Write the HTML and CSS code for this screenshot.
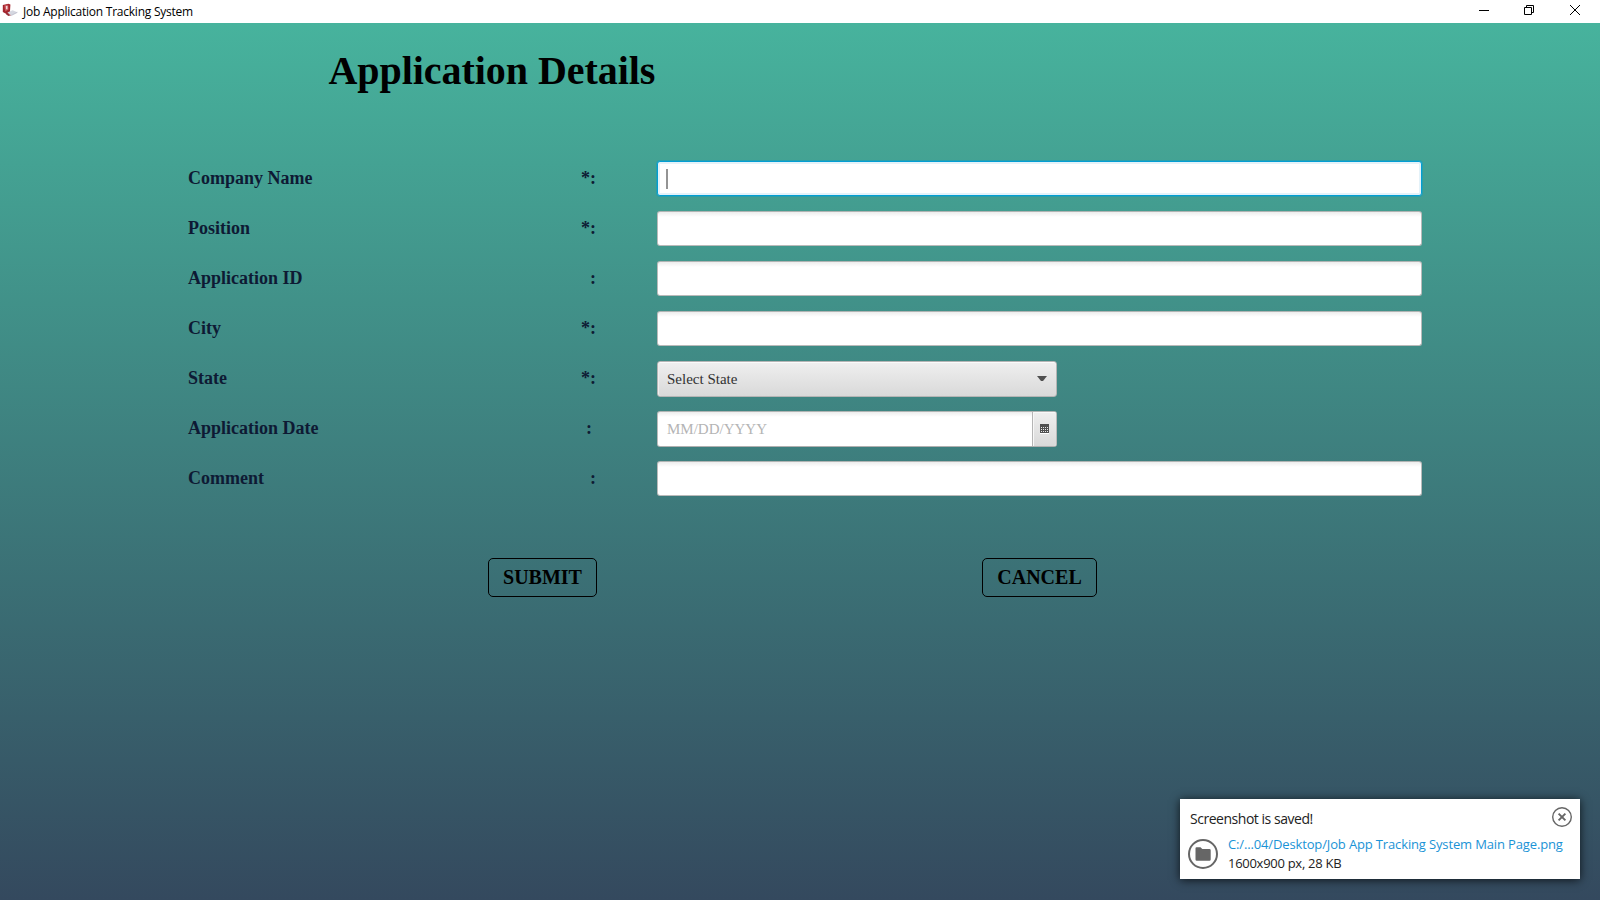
FILE: index.html
```html
<!DOCTYPE html>
<html lang="en">
<head>
<meta charset="utf-8">
<title>Job Application Tracking System</title>
<link rel="stylesheet" href="styles.css">
</head>
<body>
<div class="window">
  <header class="titlebar">
    <svg class="app-icon" width="16" height="14" viewBox="0 0 16 14">
      <path d="M.8 2 6.4.8 8.4 1.6 8 8.5 5.8 11.8 .8 9z" fill="#a3242d"/>
      <path d="M2.2 2.4 6.2 1.4l.4 5.2-3.3 2z" fill="#c9555b"/>
      <path d="M3.8 3h1.7v3.2H4z" fill="#f1d6d8"/>
      <path d="M5.4 9.4 10.6 7.2l4.8 2-6.2 3.1z" fill="#d5d7e0"/>
      <path d="m4.6 9.8 4.6 2.5-2.8.7-2.2-1.6z" fill="#96323a"/>
      <path d="m9.2 12.5 6.2-3.2" stroke="#aab" stroke-width=".7"/>
    </svg>
    <span class="app-name">Job Application Tracking System</span>
    <div class="window-controls">
      <svg width="10" height="10"><path d="M0 5.5h10" stroke="#000"/></svg>
      <svg class="restore" width="10" height="10" fill="none" stroke="#000"><path d="M.5 2.5h7v7h-7zM2.5 2.5v-2h7v7h-2"/></svg>
      <svg width="10" height="10" fill="none" stroke="#000"><path d="m0 0 10 10M10 0 0 10"/></svg>
    </div>
  </header>
  <main class="page">
    <h1 class="heading">Application Details</h1>
    <div class="form">
      <div class="row"><label>Company Name</label><span class="mark">*:</span><div class="field focused"><i class="caret"></i></div></div>
      <div class="row"><label>Position</label><span class="mark">*:</span><div class="field"></div></div>
      <div class="row"><label>Application ID</label><span class="mark">:</span><div class="field"></div></div>
      <div class="row"><label>City</label><span class="mark">*:</span><div class="field"></div></div>
      <div class="row"><label>State</label><span class="mark">*:</span>
        <div class="select"><span>Select State</span><svg class="arrow" width="10" height="5"><path d="M0 0h10L6 5H4z" fill="#505050"/></svg></div>
      </div>
      <div class="row"><label>Application Date</label><span class="mark inset">:</span>
        <div class="date"><span class="placeholder">MM/DD/YYYY</span>
          <span class="date-button"><svg width="9" height="10" shape-rendering="crispEdges">
            <path d="M0 9h9v1H0z" fill="#fff"/>
            <path d="M0 0h9v9H0z" fill="#505050"/>
            <path d="M1 3.5h7M1 5.5h7M1 7.5h7" stroke="#e8e8e8" stroke-dasharray="1 1"/>
          </svg></span>
        </div>
      </div>
      <div class="row"><label>Comment</label><span class="mark">:</span><div class="field"></div></div>
    </div>
    <div class="actions">
      <button class="action submit">SUBMIT</button>
      <button class="action cancel">CANCEL</button>
    </div>
  </main>
  <aside class="toast">
    <div class="toast-head">
      <span class="toast-title">Screenshot is saved!</span>
      <svg width="20" height="20" fill="none" stroke="#666"><circle cx="10" cy="10" r="9.3" stroke-width="1.4"/><path d="m6.6 6.6 6.8 6.8M13.4 6.6l-6.8 6.8" stroke-width="1.9"/></svg>
    </div>
    <div class="toast-body">
      <svg width="30" height="30"><circle cx="15" cy="15" r="14" fill="none" stroke="#666" stroke-width="2"/><path d="M7.5 9.3q0-1 1-1h4l1.8 1.8h7.2q1.2 0 1.2 1.2v9.2q0 1.2-1.2 1.2H8.7q-1.2 0-1.2-1.2z" fill="#666"/></svg>
      <div class="toast-lines">
        <span class="toast-link">C:/...04/Desktop/Job App Tracking System Main Page.png</span>
        <span class="toast-meta">1600x900 px, 28 KB</span>
      </div>
    </div>
  </aside>
</div>
</body>
</html>
```
FILE: styles.css
```css
* { box-sizing: border-box; }
body { margin: 0; overflow: hidden; }
svg { display: block; flex: none; }

.window {
  width: 1600px;
  height: 900px;
  display: flex;
  flex-direction: column;
  position: relative;
}

.titlebar {
  height: 23px;
  flex: none;
  display: flex;
  align-items: flex-start;
  background: #fff;
  padding: 3px 20px 0 2px;
}
.app-icon { margin-right: 5px; }
.app-name {
  font: 12px/18px "Open Sans", "Noto Sans", sans-serif;
  letter-spacing: -0.24px;
  color: #000;
  white-space: nowrap;
}
.window-controls {
  display: flex;
  gap: 35px;
  margin-left: auto;
  padding-top: 2px;
}
.restore { margin-right: 1px; }

.page {
  flex: 1;
  background: linear-gradient(#47b39d, #34495e);
  font-family: "Liberation Serif", "Times New Roman", serif;
}
.heading {
  margin: 0;
  padding: 25px 0 0 328.5px;
  font-size: 40px;
  line-height: 46px;
  letter-spacing: -0.05px;
  color: #000;
}

.form {
  display: grid;
  gap: 15px;
  padding: 67px 0 0 188px;
}
.row {
  display: grid;
  grid-template-columns: 300px 108px 765px;
  height: 35px;
}
.row > :nth-child(3) { margin-left: 61px; width: 765px; }
.row label, .mark {
  height: 35px;
  font-size: 18px;
  font-weight: bold;
  line-height: 35px;
  color: #0e1a34;
}
.mark { text-align: right; }
.inset { padding-right: 4px; }

.field, .date {
  height: 35px;
  background: linear-gradient(#ededed, #fff 5px);
  border: 1px solid #bababa;
  border-top-color: #b0b4b3;
  border-radius: 3px;
}
.field.focused {
  background: #fff;
  border: 1px solid #039ed3;
  box-shadow: 0 0 0 1px rgba(3, 158, 211, .4), inset 0 0 0 2px #e4f2f9;
  padding: 7px 0 0 8px;
}
.caret { display: block; width: 2px; height: 20px; background: #949494; }

.row > .select, .row > .date { width: 400px; height: 36px; }
.select {
  display: flex;
  align-items: center;
  justify-content: space-between;
  padding: 0 9px;
  border: 1px solid #b5b5b5;
  border-radius: 3px;
  background: linear-gradient(#efefef, #d9d9d9);
  box-shadow: inset 0 1px #fafafa, inset 1px 0 #eee;
  font-size: 15px;
  line-height: 34px;
  color: #323232;
}
.arrow { margin-bottom: 2px; }
.date {
  display: flex;
  justify-content: space-between;
  padding-left: 9px;
  overflow: hidden;
  border-bottom-color: #b0b0b0;
}
.placeholder { font-size: 15px; line-height: 34px; color: #b4b4b4; }
.date-button {
  width: 24px;
  height: 34px;
  padding: 12px 0 0 7px;
  border-left: 1px solid #b5b5b5;
  background: linear-gradient(#efefef, #d9d9d9);
  box-shadow: inset 1px 1px #f8f8f8;
}

.actions {
  display: flex;
  gap: 385px;
  padding: 62px 0 0 488px;
}
.action {
  height: 39px;
  padding: 0;
  border: 1px solid #000;
  border-radius: 5px;
  background: none;
  font: bold 20px/37px "Liberation Serif", "Times New Roman", serif;
  color: #000;
}
.submit { width: 109px; }
.cancel { width: 115px; }

.toast {
  position: absolute;
  left: 1180px;
  top: 799px;
  width: 400px;
  height: 80px;
  padding: 8px 8px 0;
  background: #fff;
  box-shadow: 0 1px 9px rgba(0, 0, 0, .75);
  font-family: "Open Sans", "Noto Sans", sans-serif;
  color: #222;
  white-space: nowrap;
}
.toast-head { display: flex; justify-content: space-between; height: 30px; padding-left: 2px; }
.toast-title { font-size: 14px; line-height: 24px; letter-spacing: -0.47px; }
.toast-body { display: flex; gap: 10px; padding-top: 2px; }
.toast-lines { display: flex; flex-direction: column; font-size: 13px; line-height: 19px; margin-top: -4px; }
.toast-link { color: #1a93d6; letter-spacing: -0.14px; }
.toast-meta { letter-spacing: -0.28px; }
```
